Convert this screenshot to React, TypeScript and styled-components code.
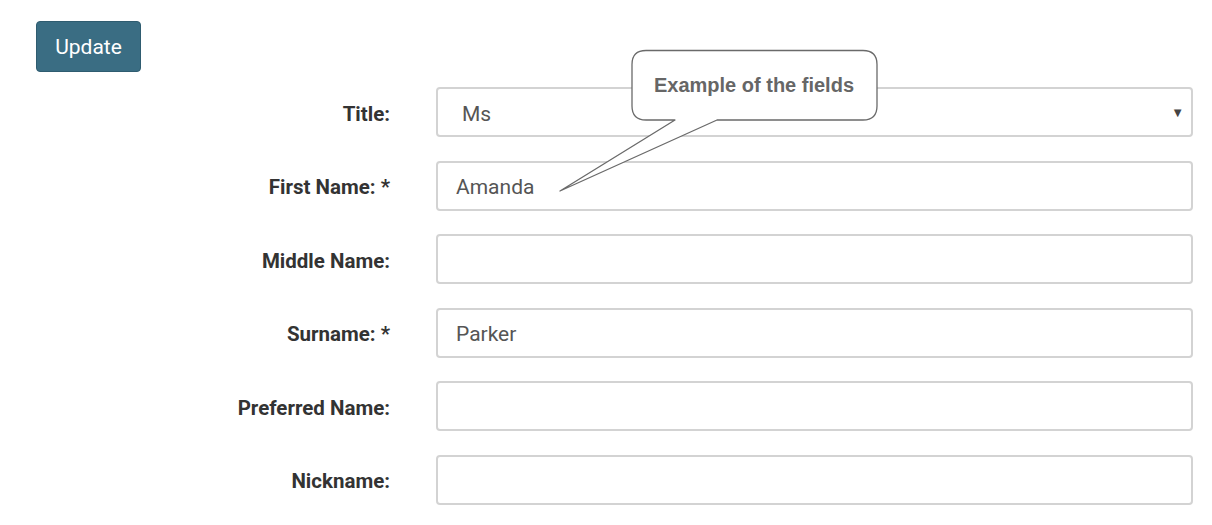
import React from 'react';
import styled, {createGlobalStyle} from "styled-components";

const GlobalStyle = createGlobalStyle`
    html, body {
        margin: 0;
        padding: 0;
        background: #fff;
        font-family: Roboto, "Liberation Sans", sans-serif;
    }
`;

const StyledPage = styled.div`
    position: relative;
    width: 1212px;
    height: 525px;
    box-sizing: border-box;
    padding: 21px 19px 0 36px;
`;

const StyledButton = styled.button`
    display: block;
    width: 105px;
    height: 51px;
    border: 1px solid #2f5c70;
    border-radius: 4px;
    background-color: #3a6d83;
    color: #fff;
    font-family: Roboto, "Liberation Sans", sans-serif;
    font-size: 21px;
    padding: 0;
    margin: 0 0 15px 0;
`;

const StyledForm = styled.form`
    display: grid;
    grid-template-columns: 354px 1fr;
    column-gap: 46px;
    row-gap: 23.6px;
    margin: 0;
`;

const StyledLabel = styled.label`
    display: flex;
    align-items: center;
    justify-content: flex-end;
    box-sizing: border-box;
    height: 50px;
    padding-top: 3px;
    color: #333;
    font-size: 20.5px;
    font-weight: 700;
`;

const StyledFieldWrapper = styled.div`
    position: relative;
    height: 50px;
`;

const StyledInput = styled.input`
    width: 100%;
    height: 50px;
    box-sizing: border-box;
    border: 2px solid #d3d3d3;
    border-radius: 4px;
    padding: 3px 0 0 18px;
    font-family: Roboto, "Liberation Sans", sans-serif;
    font-size: 21px;
    color: #555;
    background: #fff;
    outline: none;
`;

const StyledSelect = styled.select`
    width: 100%;
    height: 50px;
    box-sizing: border-box;
    border: 2px solid #d3d3d3;
    border-radius: 4px;
    padding: 3px 0 0 24px;
    font-family: Roboto, "Liberation Sans", sans-serif;
    font-size: 21px;
    color: #555;
    background: #fff;
    appearance: none;
    -webkit-appearance: none;
    outline: none;
`;

const StyledArrow = styled.span`
    position: absolute;
    right: 9px;
    top: 50%;
    transform: translateY(-50%);
    font-size: 13px;
    color: #444;
    pointer-events: none;
`;

const StyledCallout = styled.div`
    position: absolute;
    left: 555px;
    top: 48px;
    width: 327px;
    height: 148px;
`;

const StyledCalloutShape = styled.svg`
    position: absolute;
    left: 0;
    top: 0;
`;

const StyledCalloutText = styled.div`
    position: relative;
    display: flex;
    align-items: center;
    justify-content: center;
    margin-left: 76px;
    width: 246px;
    height: 74px;
    font-family: "Liberation Sans", Arial, sans-serif;
    font-weight: 700;
    font-size: 20px;
    color: #666;
`;

const fields = [
    {label: "First Name: *", value: "Amanda"},
    {label: "Middle Name:", value: ""},
    {label: "Surname: *", value: "Parker"},
    {label: "Preferred Name:", value: ""},
    {label: "Nickname:", value: ""},
];

const App = () => {
    return (
        <StyledPage>
            <GlobalStyle/>
            <StyledButton type="button">Update</StyledButton>
            <StyledForm>
                <StyledLabel>Title:</StyledLabel>
                <StyledFieldWrapper>
                    <StyledSelect defaultValue="Ms">
                        <option>Mr</option>
                        <option>Ms</option>
                        <option>Mrs</option>
                        <option>Dr</option>
                    </StyledSelect>
                    <StyledArrow>▼</StyledArrow>
                </StyledFieldWrapper>
                {fields.map(field => (
                    <React.Fragment key={field.label}>
                        <StyledLabel>{field.label}</StyledLabel>
                        <StyledFieldWrapper>
                            <StyledInput type="text" defaultValue={field.value} readOnly/>
                        </StyledFieldWrapper>
                    </React.Fragment>
                ))}
            </StyledForm>
            <StyledCallout>
                {/* box with the pointer towards the first name field */}
                <StyledCalloutShape width="327" height="148" viewBox="0 0 327 148">
                    <path
                        d="M91 2.5 H308 Q322 2.5 322 16.5 V58 Q322 72 308 72 H162 L5 143 L120 72 H91 Q77 72 77 58 V16.5 Q77 2.5 91 2.5 Z"
                        fill="#fff"
                        stroke="#6a6a6a"
                        strokeWidth="1.3"
                        strokeLinejoin="round"
                    />
                </StyledCalloutShape>
                <StyledCalloutText>Example of the fields</StyledCalloutText>
            </StyledCallout>
        </StyledPage>
    );
};

export default App;
